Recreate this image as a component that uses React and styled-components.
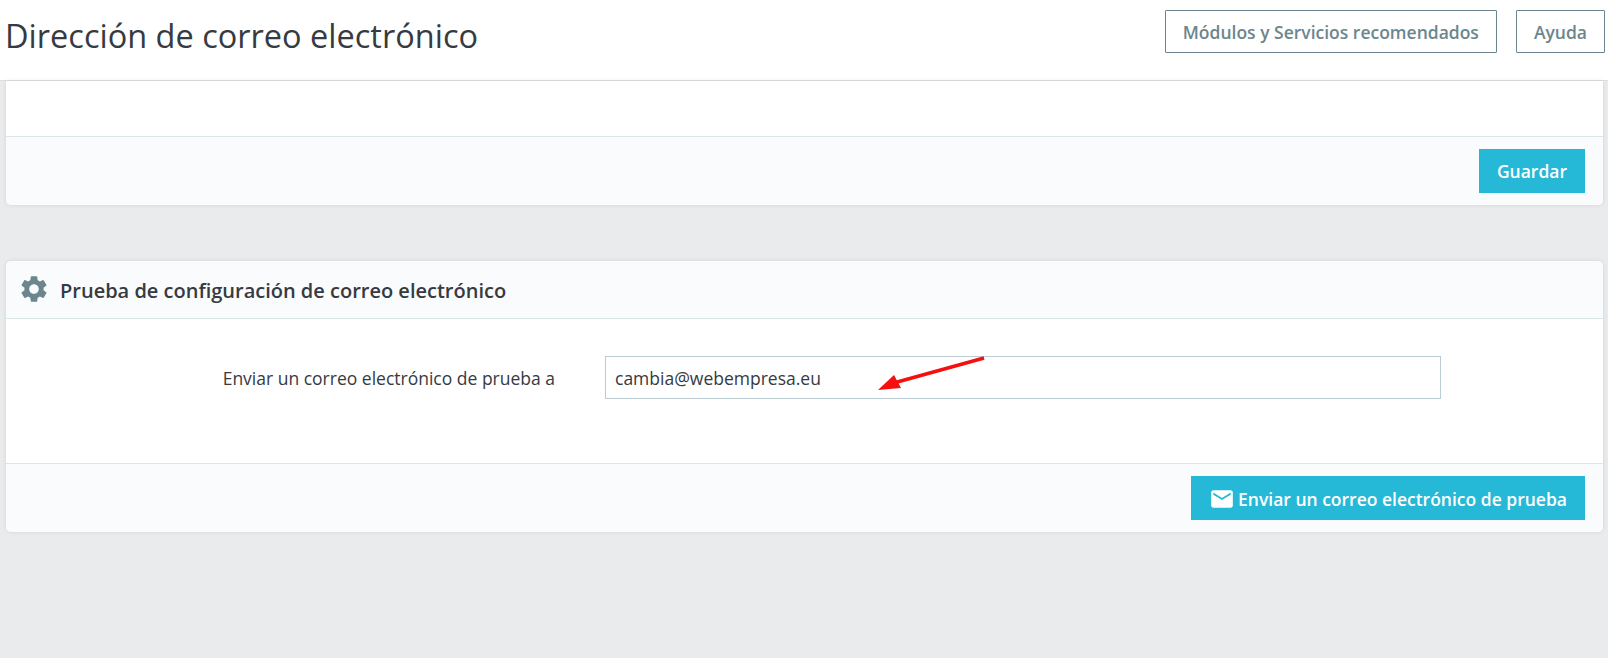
import React from 'react';
import styled, { createGlobalStyle } from 'styled-components';
import { MdSettings, MdEmail } from 'react-icons/md';

const GlobalStyle = createGlobalStyle`
  html, body {
    margin: 0;
    padding: 0;
    background: #eaebec;
  }
  * {
    box-sizing: border-box;
  }
`;

const Page = styled.div`
  width: 1608px;
  height: 658px;
  overflow: hidden;
  font-family: "Open Sans", "Liberation Sans", sans-serif;
  color: #363a41;
`;

const Header = styled.header`
  height: 81px;
  padding: 10px 3px 0 5px;
  display: flex;
  align-items: flex-start;
  justify-content: space-between;
  background: #fff;
  border-bottom: 1px solid #dfdfdf;
`;

const PageTitle = styled.h1`
  margin: 4px 0 0;
  font-size: 32.5px;
  line-height: 44px;
  font-weight: 400;
`;

const HeaderActions = styled.div`
  display: flex;
  gap: 19px;
`;

const OutlineButton = styled.button`
  height: 43px;
  padding: 0 17px;
  background: #fff;
  border: 1px solid #6c868e;
  border-radius: 1px;
  color: #6c868e;
  font: 600 17.5px "Open Sans", sans-serif;
`;

const Content = styled.main`
  padding: 0 5px 0 6px;
  display: flex;
  flex-direction: column;
  gap: 56px;
`;

const Card = styled.section`
  background: #fff;
  border-radius: 0 0 5px 5px;
  border-top-left-radius: ${(p) => (p.$rounded ? '5px' : '0')};
  border-top-right-radius: ${(p) => (p.$rounded ? '5px' : '0')};
  box-shadow: 0 0 4px rgba(0, 0, 0, 0.1);
  overflow: hidden;
`;

const CardHeader = styled.div`
  height: 58px;
  padding: 2px 0 0 12px;
  display: flex;
  align-items: center;
  gap: 10px;
  background: #fafbfc;
  border-bottom: 1px solid #dbe6e9;
  font-size: 20px;
  font-weight: 600;
  svg {
    color: #6c868e;
    margin-top: -4px;
  }
`;

const EmptyBody = styled.div`
  height: 55px;
`;

const FormBody = styled.div`
  position: relative;
  height: 144px;
  padding-top: 37px;
  display: flex;
  align-items: flex-start;
`;

const FieldLabel = styled.label`
  width: 549px;
  padding-top: 1px;
  line-height: 43px;
  text-align: right;
  font-size: 17.5px;
`;

const TextInput = styled.input`
  width: 836px;
  height: 43px;
  margin-left: 50px;
  padding: 0 9px;
  background: #fff;
  border: 1px solid #bbcdd2;
  color: #363a41;
  font: 400 17.5px "Open Sans", sans-serif;
`;

const ArrowMark = styled.svg`
  position: absolute;
  left: 864px;
  top: 32px;
`;

const CardFooter = styled.div`
  height: 69px;
  padding: 12px 18px 0 0;
  display: flex;
  justify-content: flex-end;
  align-items: flex-start;
  background: #fafbfc;
  border-top: 1px solid #dbe6e9;
`;

const PrimaryButton = styled.button`
  height: 44px;
  padding: ${(p) => (p.$withIcon ? '2px 18px 0' : '0 18px')};
  display: flex;
  align-items: center;
  gap: 3px;
  background: #25b9d7;
  border: none;
  color: #fff;
  font: 600 17.5px "Open Sans", sans-serif;
`;

const App = () => {
  return (
    <Page>
      <GlobalStyle />
      <Header>
        <PageTitle>Dirección de correo electrónico</PageTitle>
        <HeaderActions>
          <OutlineButton>Módulos y Servicios recomendados</OutlineButton>
          <OutlineButton>Ayuda</OutlineButton>
        </HeaderActions>
      </Header>
      <Content>
        <Card>
          <EmptyBody />
          <CardFooter>
            <PrimaryButton>Guardar</PrimaryButton>
          </CardFooter>
        </Card>
        <Card $rounded>
          <CardHeader>
            <MdSettings size={32} />
            Prueba de configuración de correo electrónico
          </CardHeader>
          <FormBody>
            <FieldLabel>Enviar un correo electrónico de prueba a</FieldLabel>
            <TextInput readOnly value="cambia@webempresa.eu" />
            <ArrowMark width="120" height="50" viewBox="0 0 120 50">
              <line x1="114" y1="7" x2="20" y2="33" stroke="#f50f0f" strokeWidth="3.5" />
              <polygon points="8,39 24,24 31,37" fill="#f50f0f" />
            </ArrowMark>
          </FormBody>
          <CardFooter>
            <PrimaryButton $withIcon>
              <MdEmail size={26} />
              Enviar un correo electrónico de prueba
            </PrimaryButton>
          </CardFooter>
        </Card>
      </Content>
    </Page>
  );
};

export default App;
